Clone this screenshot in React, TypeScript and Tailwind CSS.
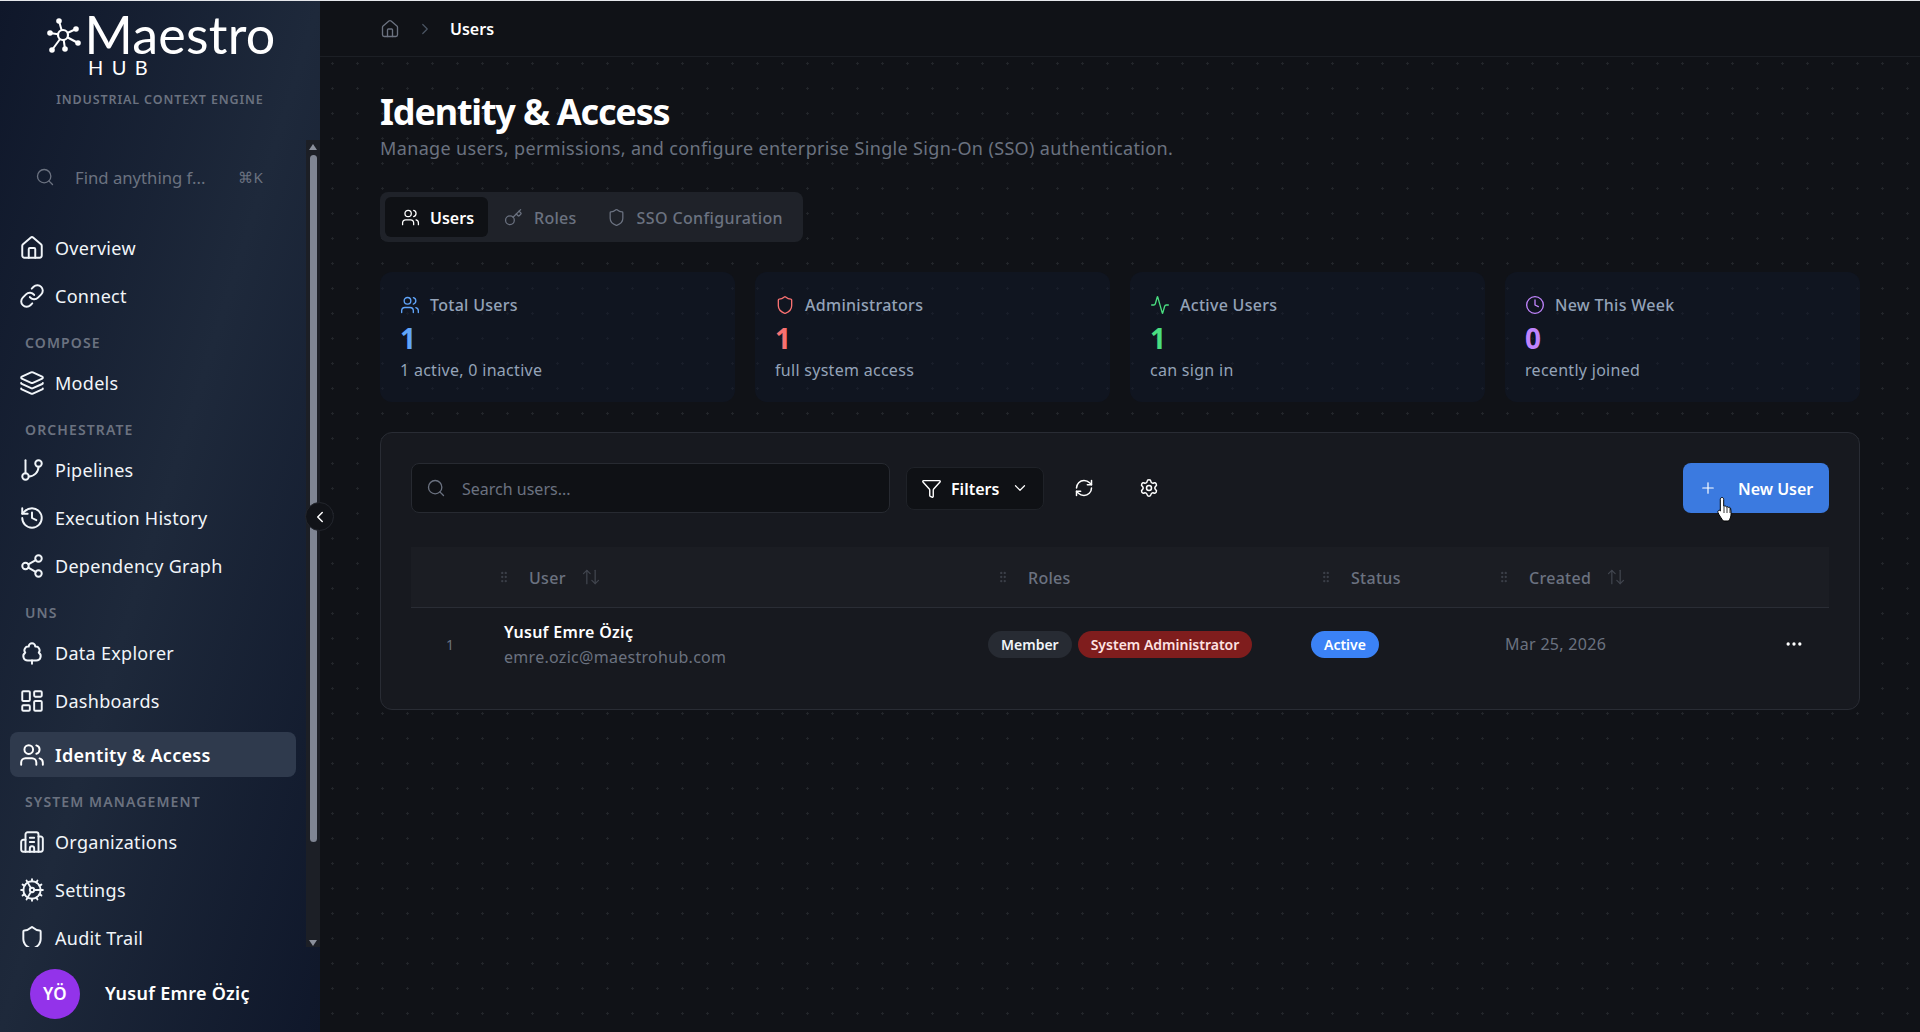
import {
  Activity, ArrowUpDown, Building2, ChevronDown, ChevronLeft, ChevronRight, Clock, Cog, Ellipsis, Filter,
  GripVertical, History, House, Key, Layers, LayoutDashboard, Link, Plus, RefreshCw, Search, Settings,
  Share2, Shield, TreeDeciduous, Users,
} from 'lucide-react';
import type { LucideIcon } from 'lucide-react';

const FONT = "font-['Noto_Sans','Open_Sans',sans-serif] tracking-[0.018em]";

function Branch({ size = 26 }: { size?: number }) {
  return (
    <svg width={size} height={size} viewBox="0 0 24 24" fill="none" stroke="currentColor" strokeWidth="1.8" strokeLinecap="round" strokeLinejoin="round">
      <line x1="6" x2="6" y1="3" y2="15" />
      <circle cx="18" cy="6" r="3" />
      <circle cx="6" cy="18" r="3" />
      <path d="M18 9a9 9 0 0 1-9 9" />
    </svg>
  );
}

function NavItem({ icon: Icon, label, active }: { icon: LucideIcon | typeof Branch; label: string; active?: boolean }) {
  return (
    <div className={`flex items-center gap-[10px] mx-[10px] pl-[9px] rounded-lg text-[18px] ${
      active ? 'h-[45px] mt-[7px] mb-[2px] bg-[#2f3a4d] font-semibold text-white' : 'h-[48px] text-[#f1f5f9]'
    }`}>
      <Icon size={26} strokeWidth={1.8} className="shrink-0" />
      <span className={active ? 'pt-[2px]' : ''}>{label}</span>
    </div>
  );
}

function NavLabel({ children }: { children: string }) {
  return (
    <div className="h-[39px] flex items-end pb-[6px] pl-[25px] text-[14px] leading-5 font-semibold tracking-[0.08em] text-[#6b7280]">
      {children}
    </div>
  );
}

function Logo() {
  const nodes = [[59, 21], [76, 29], [78, 43], [65, 49], [52, 50], [50, 33]];
  return (
    <div className="relative flex flex-col items-center h-[139px]">
      <div className="flex items-start pt-[14px] mb-[3px]">
        <svg width="40" height="44" viewBox="44 12 40 44" className="mt-[-3px]" fill="white" stroke="white">
          {nodes.map(([x, y]) => (
            <g key={`${x}-${y}`}>
              <line x1="63" y1="35" x2={x} y2={y} strokeWidth="2" />
              <circle cx={x} cy={y} r="2.8" strokeWidth="0" />
            </g>
          ))}
          <circle cx="63" cy="35" r="5" fill="#141c2f" strokeWidth="2.2" />
        </svg>
        <span className="font-['Lato',sans-serif] text-[52px] leading-[38px] font-normal text-white tracking-[0.005em]">Maestro</span>
      </div>
      <div className="w-full pl-[88px] text-[20px] leading-4 tracking-[0.42em] text-white font-['Lato',sans-serif]">HUB</div>
      <div className="mt-[17px] text-[12.5px] leading-4 font-semibold tracking-[0.07em] text-[#6b7280]">INDUSTRIAL CONTEXT ENGINE</div>
    </div>
  );
}

function Sidebar() {
  return (
    <aside className="relative w-[320px] shrink-0 flex flex-col bg-gradient-to-br from-[#0f172a] via-[#1e293b] to-[#0f172a]">
      <Logo />
      <div className="h-[807px] flex">
        <div className="w-[306px] overflow-hidden">
          <div className="h-[74px] mb-[10px] flex items-center pl-[35px] pr-[43px] text-[#6b7280]">
            <Search size={20} strokeWidth={1.6} />
            <span className="ml-[20px] pt-[2px] text-[16.7px] tracking-normal flex-1">Find anything f...</span>
            <span className="text-[15px]">⌘K</span>
          </div>
          <NavItem icon={House} label="Overview" />
          <NavItem icon={Link} label="Connect" />
          <NavLabel>COMPOSE</NavLabel>
          <NavItem icon={Layers} label="Models" />
          <NavLabel>ORCHESTRATE</NavLabel>
          <NavItem icon={Branch} label="Pipelines" />
          <NavItem icon={History} label="Execution History" />
          <NavItem icon={Share2} label="Dependency Graph" />
          <NavLabel>UNS</NavLabel>
          <NavItem icon={TreeDeciduous} label="Data Explorer" />
          <NavItem icon={LayoutDashboard} label="Dashboards" />
          <NavItem icon={Users} label="Identity & Access" active />
          <NavLabel>SYSTEM MANAGEMENT</NavLabel>
          <NavItem icon={Building2} label="Organizations" />
          <NavItem icon={Cog} label="Settings" />
          <NavItem icon={Shield} label="Audit Trail" />
        </div>
        {/* scrollbar */}
        <div className="w-[14px] bg-[#1c1f26] flex flex-col items-center">
          <div className="mt-[4px] w-0 h-0 border-x-[4px] border-x-transparent border-b-[6px] border-b-[#8b909c]" />
          <div className="mt-[5px] w-[7px] h-[687px] rounded-full bg-[#7f8593]" />
          <div className="mt-[98px] w-0 h-0 border-x-[4px] border-x-transparent border-t-[6px] border-t-[#8b909c]" />
        </div>
      </div>
      <div className="flex-1 flex items-center pl-[30px] pt-[8px] gap-[25px]">
        <div className="w-[50px] h-[50px] rounded-full bg-[#9333ea] flex items-center justify-center text-[17px] font-semibold text-white">YÖ</div>
        <span className="text-[18px] font-semibold text-white">Yusuf Emre Öziç</span>
      </div>
      <button className="absolute left-[305px] top-[501px] w-[29px] h-[29px] rounded-full bg-[#111318] border border-[#23262d] flex items-center justify-center text-white z-10">
        <ChevronLeft size={18} />
      </button>
    </aside>
  );
}

function StatCard({ icon: Icon, label, value, sub, color }: { icon: LucideIcon; label: string; value: string; sub: string; color: string }) {
  return (
    <div className="h-[130px] rounded-xl bg-[#0f172a]/50 px-[20px] pt-[21px]">
      <div className="flex items-center gap-[10px] h-[24px] text-[16px] font-medium text-[#94a3b8]">
        <Icon size={20} strokeWidth={1.6} className={color} />
        <span>{label}</span>
      </div>
      <div className={`mt-[3px] text-[28px] leading-9 font-bold ${color}`}>{value}</div>
      <div className="mt-[2px] text-[16px] leading-6 text-[#94a3b8]">{sub}</div>
    </div>
  );
}

function HeaderCell({ label, sort, className = '' }: { label: string; sort?: boolean; className?: string }) {
  return (
    <div className={`flex items-center text-[16px] font-medium text-[#6b7280] ${className}`}>
      <GripVertical size={14} className="text-[#3b3f48] w-[14px] mr-[18px] ml-[-3px]" />
      <span className="pt-[2px]">{label}</span>
      {sort && <ArrowUpDown size={20} strokeWidth={1.5} className="ml-[15px] text-[#41454e]" />}
    </div>
  );
}

const GRID = 'grid grid-cols-[89px_484px_323px_193px_1fr]';

function UsersPanel() {
  return (
    <div className="mt-[30px] h-[278px] rounded-xl bg-[#17191f] border border-[#292c34] px-[30px] pt-[30px]">
      <div className="flex items-center h-[50px]">
        <div className="w-[479px] h-[50px] rounded-lg bg-[#0f1115] border border-[#272a31] flex items-center pl-[14px] text-[16px] tracking-normal text-[#6b7280]">
          <Search size={20} strokeWidth={1.6} />
          <span className="ml-[16px] pt-[2px]">Search users...</span>
        </div>
        <div className="ml-[16px] w-[138px] h-[43px] rounded-lg bg-[#0f1115] border border-[#1f2228] flex items-center pl-[14px] text-[16px] tracking-normal font-semibold text-white">
          <Filter size={21} strokeWidth={1.6} />
          <span className="ml-[9px] pt-[2px]">Filters</span>
          <ChevronDown size={18} strokeWidth={1.6} className="ml-[12px]" />
        </div>
        <RefreshCw size={20} strokeWidth={1.8} className="ml-[30px] text-white" />
        <Settings size={20} strokeWidth={1.8} className="ml-[45px] text-white" />
        <button className="relative ml-auto w-[146px] h-[50px] rounded-lg bg-[#3b7ae0] flex items-center pl-[16px] text-[16px] tracking-normal font-semibold text-white">
          <Plus size={18} strokeWidth={1.6} />
          <span className="ml-[21px] pt-[2px]">New User</span>
          <HandCursor />
        </button>
      </div>
      <div className={`${GRID} mt-[34px] h-[61px] bg-[#1b1d23] border-b border-[#2a2d35] items-center`}>
        <div />
        <HeaderCell label="User" sort />
        <HeaderCell label="Roles" className="pl-[15px]" />
        <HeaderCell label="Status" className="pl-[15px]" />
        <HeaderCell label="Created" sort />
      </div>
      <div className={`${GRID} h-[72px] items-center`}>
        <div className="pl-[35px] text-[14px] text-[#6b7280]">1</div>
        <div className="pl-[4px]">
          <div className="text-[16px] leading-6 font-semibold text-white">Yusuf Emre Öziç</div>
          <div className="mt-[1px] text-[16px] leading-6 text-[#6b7280]">emre.ozic@maestrohub.com</div>
        </div>
        <div className="pl-[4px] flex gap-[6px] tracking-normal">
          <span className="h-[27px] px-[13px] rounded-full bg-[#272b33] flex items-center text-[14px] font-semibold text-[#f1f5f9]">Member</span>
          <span className="h-[27px] px-[13px] rounded-full bg-[#7f1d1d] flex items-center text-[14px] font-semibold text-[#fee2e2]">System Administrator</span>
        </div>
        <div className="pl-[4px] flex tracking-normal">
          <span className="h-[27px] px-[13px] rounded-full bg-[#3b82f6] flex items-center text-[14px] font-semibold text-white">Active</span>
        </div>
        <div className="pl-[5px] flex items-center text-[16px] text-[#6b7280]">
          <span>Mar 25, 2026</span>
          <Ellipsis size={20} className="ml-auto mr-[25px] text-white" />
        </div>
      </div>
    </div>
  );
}

function HandCursor() {
  return (
    <svg width="18" height="27" viewBox="0 0 18 27" className="absolute left-[34px] top-[33px] z-10">
      <path
        d="M5 1.5c1 0 1.7.8 1.7 1.8v7l1-.2c.8-.2 1.5.1 1.8.7.7-.3 1.6-.1 2 .6.8-.3 1.7 0 2 .8.2.5.6 3 .6 5.500 0 3-1.100 5.800-2.600 7.300H6.500C5 23.500 2 19 1 16.500c-.4-1 0-1.800.8-2.100.7-.3 1.500 0 1.500.7V3.300C3.300 2.300 4 1.500 5 1.500z"
        fill="white"
        stroke="black"
        strokeWidth="1"
      />
      <path d="M7 11v6M10 11v6M13 12v5" stroke="black" strokeWidth="0.8" />
    </svg>
  );
}

export default function App() {
  return (
    <div className={`${FONT} w-full h-screen overflow-hidden flex flex-col bg-[#0f1115]`}>
      <div className="h-px bg-[#e5e7eb] shrink-0" />
      <div className="flex-1 flex min-h-0">
        <Sidebar />
        <main className="flex-1 bg-[#101217] bg-[radial-gradient(circle,#22252a_1px,transparent_1.2px)] bg-[length:25px_25px]">
          <div className="h-[56px] bg-[#101217] border-b border-[#1c1f25] flex items-center pl-[60px] text-white">
            <House size={20} strokeWidth={1.6} className="text-[#6b7280]" />
            <ChevronRight size={18} strokeWidth={1.6} className="ml-[16px] text-[#4b5563]" />
            <span className="ml-[16px] text-[16px] tracking-normal font-semibold">Users</span>
          </div>
          <div className="px-[60px] pt-[35px]">
            <h1 className="text-[36px] leading-10 font-bold tracking-[-0.033em] text-white">Identity &amp; Access</h1>
            <p className="mt-[2px] text-[18px] leading-7 tracking-[0.02em] text-[#6b7280]">
              Manage users, permissions, and configure enterprise Single Sign-On (SSO) authentication.
            </p>
            <div className="mt-[30px] inline-flex items-center h-[50px] p-[5px] rounded-lg bg-[#1f2229] text-[16px] text-[#6b7280]">
              <div className="h-[40px] w-[103px] rounded-md bg-[#0f1115] flex items-center pl-[16px] gap-[10px] tracking-normal font-semibold text-white">
                <Users size={19} strokeWidth={1.6} />
                <span className="pt-[2px]">Users</span>
              </div>
              <div className="flex items-center pl-[16px] gap-[11px] font-medium">
                <Key size={19} strokeWidth={1.6} />
                <span className="pt-[2px]">Roles</span>
              </div>
              <div className="flex items-center pl-[30px] pr-[15px] gap-[11px] font-medium tracking-[0.023em]">
                <Shield size={19} strokeWidth={1.6} />
                <span className="pt-[2px]">SSO Configuration</span>
              </div>
            </div>
            <div className="mt-[30px] grid grid-cols-4 gap-[20px]">
              <StatCard icon={Users} label="Total Users" value="1" sub="1 active, 0 inactive" color="text-[#60a5fa]" />
              <StatCard icon={Shield} label="Administrators" value="1" sub="full system access" color="text-[#f87171]" />
              <StatCard icon={Activity} label="Active Users" value="1" sub="can sign in" color="text-[#4ade80]" />
              <StatCard icon={Clock} label="New This Week" value="0" sub="recently joined" color="text-[#c084fc]" />
            </div>
            <UsersPanel />
          </div>
        </main>
      </div>
    </div>
  );
}
